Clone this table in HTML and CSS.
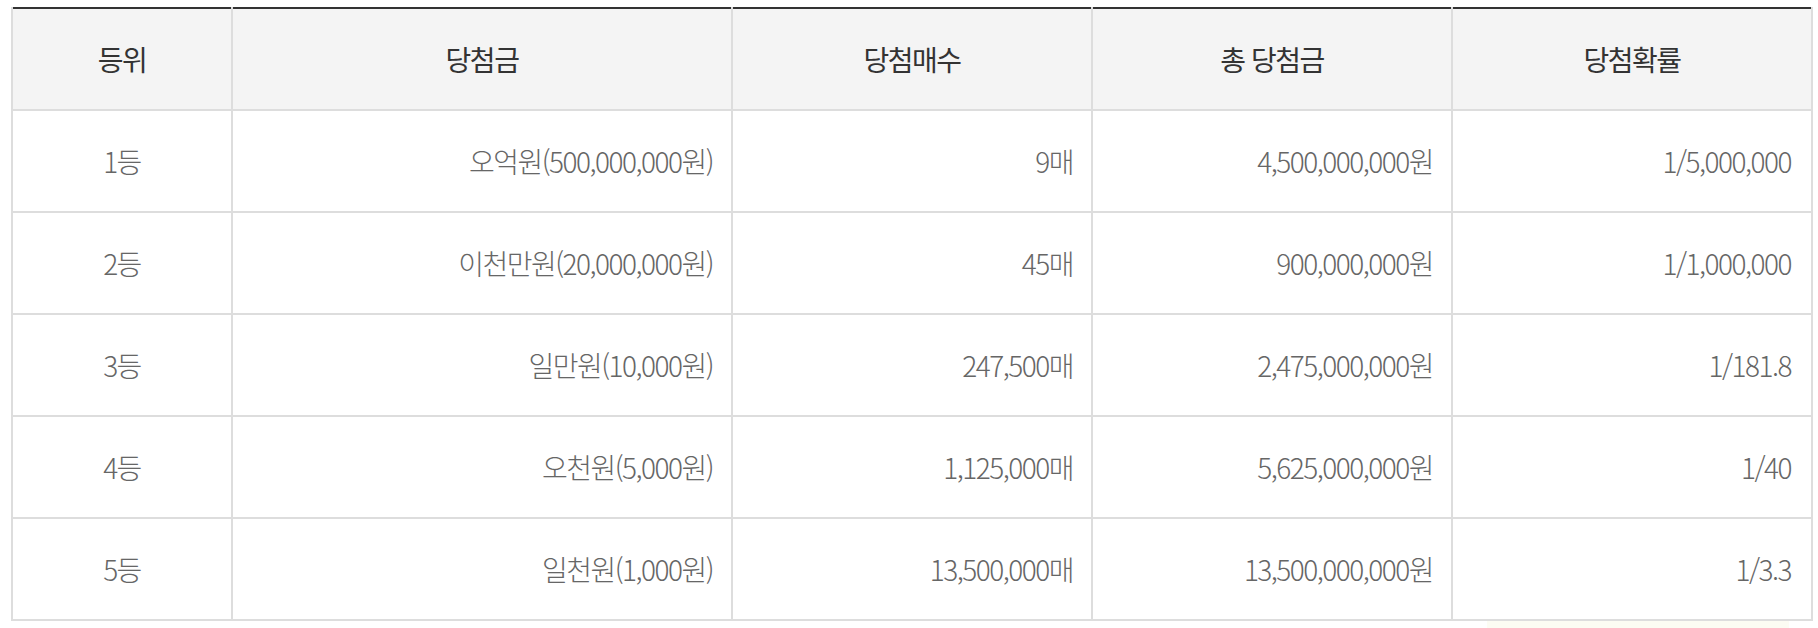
FILE: index.html
```html
<!DOCTYPE html>
<html lang="ko">
<head>
<meta charset="utf-8">
<title>당첨금 안내</title>
<link rel="stylesheet" href="styles.css">
</head>
<body>
<div class="wrap">
  <table class="prize">
    <colgroup>
      <col class="c-rank">
      <col class="c-prize">
      <col class="c-count">
      <col class="c-total">
      <col class="c-prob">
    </colgroup>
    <thead>
      <tr>
        <th>등위</th>
        <th>당첨금</th>
        <th>당첨매수</th>
        <th>총 당첨금</th>
        <th>당첨확률</th>
      </tr>
    </thead>
    <tbody>
      <tr>
        <td class="center">1등</td>
        <td>오억원(500,000,000원)</td>
        <td>9매</td>
        <td>4,500,000,000원</td>
        <td class="last">1/5,000,000</td>
      </tr>
      <tr>
        <td class="center">2등</td>
        <td>이천만원(20,000,000원)</td>
        <td>45매</td>
        <td>900,000,000원</td>
        <td class="last">1/1,000,000</td>
      </tr>
      <tr>
        <td class="center">3등</td>
        <td>일만원(10,000원)</td>
        <td>247,500매</td>
        <td>2,475,000,000원</td>
        <td class="last">1/181.8</td>
      </tr>
      <tr>
        <td class="center">4등</td>
        <td>오천원(5,000원)</td>
        <td>1,125,000매</td>
        <td>5,625,000,000원</td>
        <td class="last">1/40</td>
      </tr>
      <tr>
        <td class="center">5등</td>
        <td>일천원(1,000원)</td>
        <td>13,500,000매</td>
        <td>13,500,000,000원</td>
        <td class="last">1/3.3</td>
      </tr>
    </tbody>
  </table>
  <div class="glow"></div>
</div>
</body>
</html>
```
FILE: styles.css
```css
html, body {
  margin: 0;
  padding: 0;
  background: #ffffff;
}
body {
  font-family: "Noto Sans CJK KR", "Noto Sans", sans-serif;
}
.wrap {
  padding: 7px 7px 0 11px;
}
.prize {
  width: 1800px;
  table-layout: fixed;
  border-collapse: collapse;
  border-top: 2px solid #333333;
}
.c-rank { width: 220px; }
.c-prize { width: 500px; }
.c-count { width: 360px; }
.c-total { width: 360px; }
.c-prob { width: 360px; }
.prize th,
.prize td {
  border: 2px solid #dddddd;
  height: 102px;
  padding: 0 18px;
  box-sizing: border-box;
  letter-spacing: -1.5px;
  white-space: nowrap;
}
.prize thead th {
  border-top: none;
  background: #f4f4f4;
  color: #333333;
  font-size: 28px;
  font-weight: 400;
  text-align: center;
}
.prize td {
  color: #666666;
  font-size: 28px;
  font-weight: 300;
  text-align: right;
}
.prize td.center {
  text-align: center;
}
.prize td.last {
  padding-right: 20px;
}
.glow {
  margin: 0 22px 0 auto;
  width: 302px;
  height: 10px;
  background: #fcfcf3;
}
```
